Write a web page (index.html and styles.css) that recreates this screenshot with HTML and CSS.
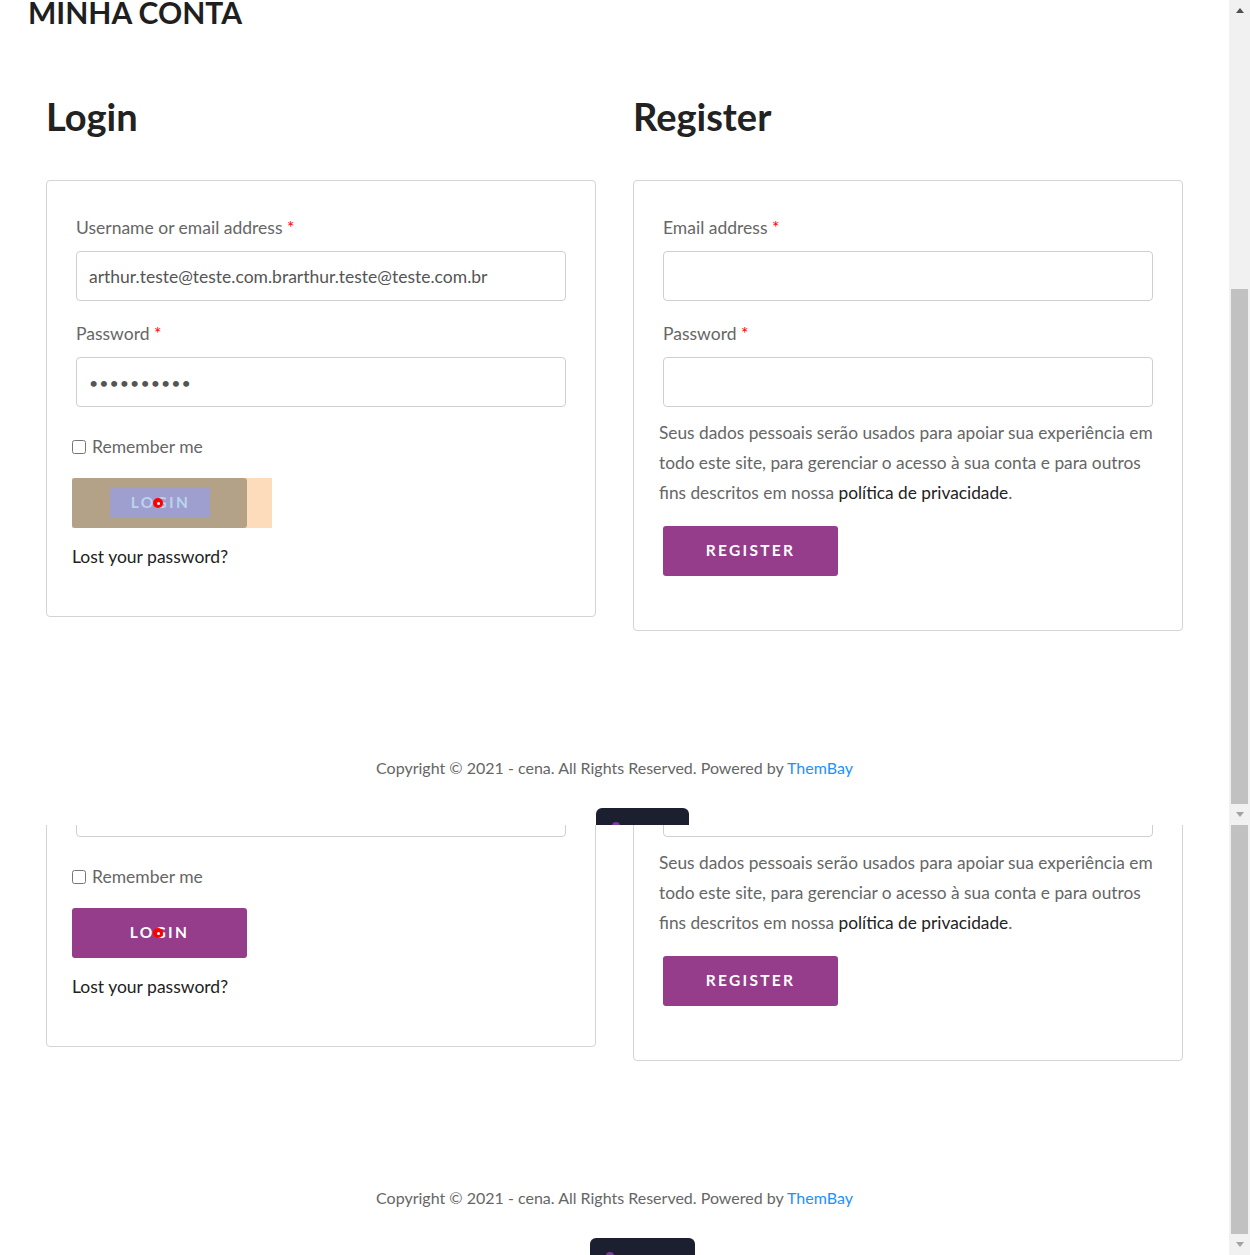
FILE: index.html
```html
<!DOCTYPE html>
<html lang="pt-BR">
<head>
<meta charset="utf-8">
<title>Minha conta</title>
<link rel="stylesheet" href="styles.css">
</head>
<body>
<div class="screen">

  <section class="viewport vp-top">
    <div class="main">
      <div class="page">
        <h1 class="title">MINHA CONTA</h1>
        <div class="columns">
          <div class="col">
            <h2 class="col-title">Login</h2>
            <form class="card card-login">
              <div class="field">
                <label class="label">Username or email address <span class="req">*</span></label>
                <input class="input" type="text" value="arthur.teste@teste.com.brarthur.teste@teste.com.br">
              </div>
              <div class="field">
                <label class="label">Password <span class="req">*</span></label>
                <input class="input input-pass" type="password" value="1234567890">
              </div>
              <label class="remember"><input class="check" type="checkbox"> Remember me</label>
              <div class="btn-wrap highlight">
                <button class="btn" type="button"><span class="btn-content">Login</span><span class="cursor"></span></button>
              </div>
              <p class="lost">Lost your password?</p>
            </form>
          </div>
          <div class="col">
            <h2 class="col-title">Register</h2>
            <form class="card card-register">
              <div class="field">
                <label class="label">Email address <span class="req">*</span></label>
                <input class="input" type="text" value="">
              </div>
              <div class="field">
                <label class="label">Password <span class="req">*</span></label>
                <input class="input" type="password" value="">
              </div>
              <p class="privacy">Seus dados pessoais serão usados para apoiar sua experiência em todo este site, para gerenciar o acesso à sua conta e para outros fins descritos em nossa <a class="privacy-link" href="#">política de privacidade</a>.</p>
              <button class="btn btn-register" type="button">Register</button>
            </form>
          </div>
        </div>
        <footer class="footer">Copyright © 2021 - cena. All Rights Reserved. Powered by <a class="footer-link" href="#">ThemBay</a></footer>
      </div>
      <div class="fab fab-top"><span class="fab-dot"></span></div>
    </div>
    <div class="scrollbar">
      <div class="sb-btn"><span class="arrow-up"></span></div>
      <div class="sb-track sb-track-top"></div>
      <div class="sb-thumb sb-thumb-top"></div>
      <div class="sb-btn"><span class="arrow-down"></span></div>
    </div>
  </section>

  <section class="viewport vp-bottom">
    <div class="main">
      <div class="page page-shifted">
        <h1 class="title">MINHA CONTA</h1>
        <div class="columns">
          <div class="col">
            <h2 class="col-title">Login</h2>
            <form class="card card-login">
              <div class="field">
                <label class="label">Username or email address <span class="req">*</span></label>
                <input class="input" type="text" value="arthur.teste@teste.com.brarthur.teste@teste.com.br">
              </div>
              <div class="field">
                <label class="label">Password <span class="req">*</span></label>
                <input class="input input-pass" type="password" value="1234567890">
              </div>
              <label class="remember"><input class="check" type="checkbox"> Remember me</label>
              <div class="btn-wrap">
                <button class="btn" type="button"><span class="btn-content">Login</span><span class="cursor"></span></button>
              </div>
              <p class="lost">Lost your password?</p>
            </form>
          </div>
          <div class="col">
            <h2 class="col-title">Register</h2>
            <form class="card card-register">
              <div class="field">
                <label class="label">Email address <span class="req">*</span></label>
                <input class="input" type="text" value="">
              </div>
              <div class="field">
                <label class="label">Password <span class="req">*</span></label>
                <input class="input" type="password" value="">
              </div>
              <p class="privacy">Seus dados pessoais serão usados para apoiar sua experiência em todo este site, para gerenciar o acesso à sua conta e para outros fins descritos em nossa <a class="privacy-link" href="#">política de privacidade</a>.</p>
              <button class="btn btn-register" type="button">Register</button>
            </form>
          </div>
        </div>
        <footer class="footer">Copyright © 2021 - cena. All Rights Reserved. Powered by <a class="footer-link" href="#">ThemBay</a></footer>
      </div>
      <div class="fab fab-bottom"><span class="fab-dot"></span></div>
    </div>
    <div class="scrollbar">
      <div class="sb-thumb sb-thumb-bottom"></div>
      <div class="sb-btn"><span class="arrow-down"></span></div>
    </div>
  </section>

</div>
</body>
</html>
```

FILE: styles.css
```css
html, body {
  margin: 0;
  padding: 0;
  background: #fff;
  overflow: hidden;
}

body {
  font-family: Lato, "Open Sans", sans-serif;
  color: #666;
}

.viewport {
  display: flex;
  overflow: hidden;
}

.vp-top { height: 825px; }
.vp-bottom { height: 430px; }

.main {
  position: relative;
  width: 1229px;
  overflow: hidden;
}

.page { display: flow-root; }

.page-shifted { margin-top: -395px; }

.title {
  margin: -6px 0 0 28px;
  font-size: 30px;
  line-height: 36px;
  font-weight: 700;
  color: #1f1f1f;
}

.columns {
  display: grid;
  grid-template-columns: 550px 550px;
  column-gap: 37px;
  margin: 0 46px;
  align-items: start;
}

.col-title {
  margin: 63px 0 41px 0;
  font-size: 38px;
  line-height: 46px;
  font-weight: 700;
  color: #222;
}

.card {
  border: 1px solid #d4d4d4;
  border-radius: 4px;
  padding: 33px 29px 46px;
  margin: 0;
}

.card-register { padding-bottom: 54px; }

.field + .field { margin-top: 19px; }

.label {
  display: block;
  font-size: 17.5px;
  line-height: 27px;
  color: #666;
}

.req { color: #ff0000; }

.input {
  display: block;
  margin-top: 10px;
  width: 100%;
  height: 50px;
  box-sizing: border-box;
  border: 1px solid #cfcfcf;
  border-radius: 4px;
  padding: 0 12px;
  font-family: Lato, sans-serif;
  font-size: 17.5px;
  color: #555;
  background: #fff;
  outline: none;
}

.input-pass {
  font-size: 16px;
  letter-spacing: 1px;
}

.remember {
  display: flex;
  align-items: center;
  margin: 26px 0 0 -4px;
  font-size: 17.5px;
  line-height: 27px;
  color: #666;
}

.check {
  width: 14px;
  height: 14px;
  margin: 0 6px 0 0;
}

.btn-wrap {
  margin: 18px 0 0 -4px;
  width: 175px;
}

.btn {
  position: relative;
  display: block;
  width: 175px;
  height: 50px;
  border: 0;
  border-radius: 3px;
  background: #953c8b;
  color: #fff;
  font-family: Lato, sans-serif;
  font-weight: 700;
  font-size: 15.5px;
  letter-spacing: 2.3px;
  text-transform: uppercase;
  padding: 0 0 2px;
  cursor: pointer;
}

.btn-content {
  display: inline-block;
  line-height: 30px;
}

.highlight {
  width: 200px;
  background: #fcdcba;
}

.highlight .btn {
  background: #b4a288;
  color: #bad3ee;
  padding: 0;
}

.highlight .btn-content {
  width: 100px;
  height: 30px;
  line-height: 28px;
  background: #9e9fce;
  text-indent: 2px;
}

.cursor {
  position: absolute;
  left: 81px;
  top: 20px;
  width: 10px;
  height: 10px;
  border-radius: 50%;
  background: #ff0000;
}

.cursor::after {
  content: "";
  position: absolute;
  left: 3.5px;
  top: 3.5px;
  width: 3px;
  height: 3px;
  border-radius: 50%;
  background: #fff;
}

.lost {
  margin: 15px 0 0 -4px;
  font-size: 17.5px;
  line-height: 27px;
  color: #222;
}

.privacy {
  margin: 11px -6px 0 -4px;
  font-size: 17.3px;
  line-height: 30px;
  color: #666;
}

.privacy-link {
  color: #222;
  text-decoration: none;
}

.btn-register {
  margin-top: 18px;
}

.footer {
  margin-top: 125px;
  text-align: center;
  font-size: 16px;
  line-height: 24px;
  color: #666;
}

.footer-link {
  color: #1e90ff;
  text-decoration: none;
}

.fab {
  position: absolute;
  bottom: 0;
  height: 17px;
  background: #1b1f30;
  border-radius: 6px 6px 0 0;
  overflow: hidden;
}

.fab-top { left: 596px; width: 93px; }
.fab-bottom { left: 590px; width: 105px; }

.fab-dot {
  position: absolute;
  left: 16px;
  top: 14px;
  width: 8px;
  height: 8px;
  border-radius: 50%;
  background: #7a3c9e;
}

.scrollbar {
  width: 21px;
  flex: none;
  display: flex;
  flex-direction: column;
  background: #f1f1f1;
}

.sb-btn {
  height: 21px;
  flex: none;
  display: flex;
  align-items: center;
  justify-content: center;
}

.sb-track-top { height: 268px; flex: none; }

.sb-thumb {
  flex: none;
  margin: 0 2px;
  background: #c1c1c1;
}

.sb-thumb-top { height: 515px; }
.sb-thumb-bottom { height: 409px; }

.arrow-up {
  width: 0;
  height: 0;
  border-left: 4.5px solid transparent;
  border-right: 4.5px solid transparent;
  border-bottom: 5px solid #505050;
}

.arrow-down {
  width: 0;
  height: 0;
  border-left: 4.5px solid transparent;
  border-right: 4.5px solid transparent;
  border-top: 5px solid #a3a3a3;
}
```
